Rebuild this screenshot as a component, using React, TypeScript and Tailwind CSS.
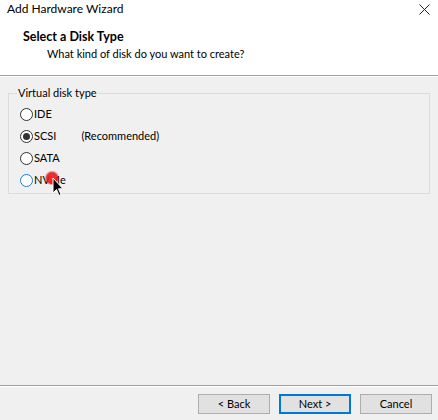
import type React from "react"

const font = { fontFamily: 'Lato, "Liberation Sans", sans-serif' }

export default function App() {
  return (
    <div className="w-[438px] h-[420px] bg-[#f0f0f0] flex flex-col text-[11px] text-black overflow-hidden relative" style={font}>
      <div className="bg-white h-[75px] flex flex-col">
        <div className="flex items-start justify-between pl-[7px] pr-[7px] pt-[1px] h-[30px]">
          <span className="text-[12px] leading-[16px]">Add Hardware Wizard</span>
          <svg width="11" height="11" viewBox="0 0 11 11" className="mt-[3px] mr-[1px]">
            <path d="M0.5 0.5 L10.5 10.5 M10.5 0.5 L0.5 10.5" stroke="#222" strokeWidth="1" />
          </svg>
        </div>
        <div className="pl-[23px] text-[12.5px] font-bold leading-[16px] -mt-[1px]">Select a Disk Type</div>
        <div className="pl-[47px] text-[11px] leading-[16px] mt-[1px]">What kind of disk do you want to create?</div>
      </div>
      <div className="h-[1px] bg-[#a0a0a0]" />
      <div className="h-[1px] bg-white" />

      <div className="flex-1 px-[8px] pt-[9px]">
        <fieldset className="border border-[#dcdcdc] h-[108px] pl-[11px] pr-2 m-0">
          <legend className="px-[1px] -ml-[3px] leading-[14px]">Virtual disk type</legend>
          <div className="flex flex-col gap-[6px] mt-[6px]">
            <Radio label="IDE" />
            <Radio label="SCSI" checked extra="(Recommended)" />
            <Radio label="SATA" />
            <Radio label="NVMe" hover />
          </div>
        </fieldset>
      </div>

      <div className="h-[1px] bg-[#a0a0a0]" />
      <div className="h-[1px] bg-white" />
      <div className="flex justify-end gap-[9px] pr-[6px] pt-[7px] h-[33px]">
        <Button label="< Back" />
        <Button label="Next >" primary />
        <Button label="Cancel" />
      </div>

      <svg className="absolute left-[44px] top-[170px]" width="22" height="30" viewBox="0 0 22 30">
        <defs>
          <radialGradient id="g" cx="50%" cy="50%" r="50%">
            <stop offset="0%" stopColor="#ff3030" stopOpacity="1" />
            <stop offset="70%" stopColor="#e01010" stopOpacity="0.85" />
            <stop offset="100%" stopColor="#e01010" stopOpacity="0" />
          </radialGradient>
        </defs>
        <circle cx="8" cy="8" r="7.5" fill="url(#g)" />
        <path d="M9 8 L9 23 L12.5 19.5 L15 25.5 L17 24.5 L14.5 18.8 L19 18.8 Z" fill="#000" stroke="#fff" strokeWidth="1" />
      </svg>
    </div>
  )
}

interface RadioProps {
  label: string
  checked?: boolean
  extra?: string
  hover?: boolean
}

function Radio({ label, checked, extra, hover }: RadioProps) {
  return (
    <div className="flex items-center h-[16px]">
      <span
        className={`w-[13px] h-[13px] rounded-full border bg-white flex items-center justify-center ${
          hover ? "border-[#1a7fd6]" : "border-[#333]"
        }`}
      >
        {checked && <span className="w-[7px] h-[7px] rounded-full bg-[#333]" />}
      </span>
      <span className="ml-[1px] leading-[16px]">{label}</span>
      {extra && <span className="ml-[25px] leading-[16px]">{extra}</span>}
    </div>
  )
}

function Button({ label, primary }: { label: string; primary?: boolean }) {
  return (
    <div
      className={`w-[72px] h-[20px] flex items-center justify-center bg-[#e1e1e1] border leading-[14px] ${
        primary ? "border-[#0078d7] shadow-[inset_0_0_0_1px_#0078d7]" : "border-[#adadad]"
      }`}
    >
      {label}
    </div>
  )
}
